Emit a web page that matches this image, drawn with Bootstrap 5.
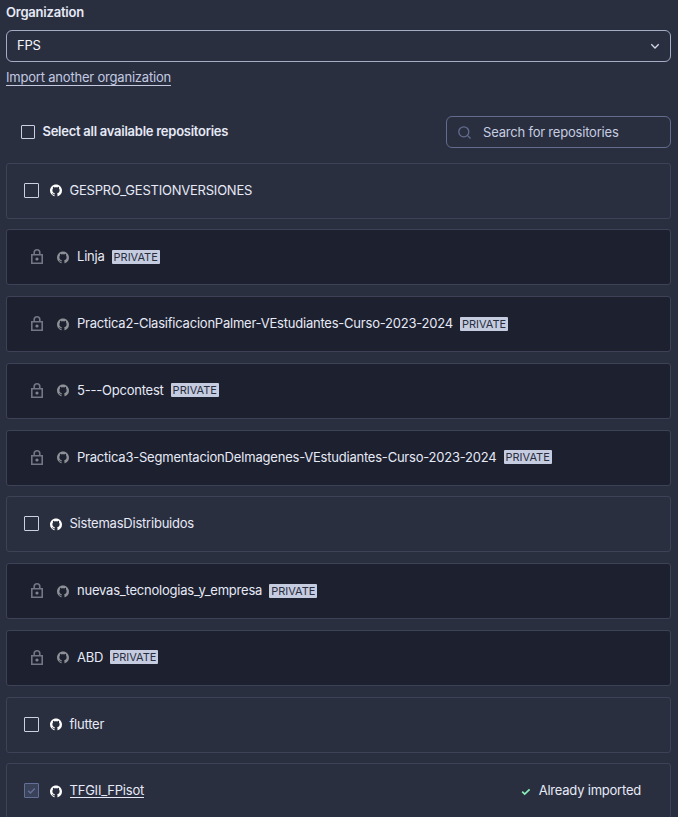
<!DOCTYPE html>
<html lang="en">
<head>
<meta charset="utf-8">
<meta name="viewport" content="width=device-width, initial-scale=1">
<title>Import repositories</title>
<link href="https://cdn.jsdelivr.net/npm/bootstrap@5.3.0/dist/css/bootstrap.min.css" rel="stylesheet">
<style>
html, body { height: 817px; overflow: hidden; }
body { background: #2a2f40; color: #e6eaf6; font: 400 13px/18px Inter, sans-serif; letter-spacing: -.22px; }
.page { padding: 3px 7px 0 6px; }
.org-label { font-weight: 600; line-height: 18px; margin-bottom: 9px; }
.org-select { height: 32px; border: 1px solid #a5adc6; border-radius: 6px; padding: 0 9px 0 10px; color: #f4f5fb; }
.org-select span { padding-bottom: 2px; }
.import-link { color: #c3cae0; line-height: 15px; border-bottom: 1px solid #c3cae0; margin-top: 8px; letter-spacing: -.2px; }
.toolbar { margin-top: 30px; padding-left: 15px; height: 32px; }
.toolbar-label { font-weight: 600; margin-left: 7.5px; padding-bottom: 2px; letter-spacing: -.26px; }
.search { width: 225px; height: 32px; border: 1px solid #626c8f; border-radius: 6px; padding-left: 11px; color: #c6cde0; letter-spacing: -.2px; }
.repos { margin-top: 14.6px; gap: 10.75px; }
.repo { height: 56px; flex: none; border: 1px solid #3d4256; border-radius: 3px; padding: 0 29px 1px 17px; }
.repo > span:not(.box):not(.tag) { padding-bottom: 1px; }
.repo.locked { background: #1d202f; padding-left: 24px; }
.box { width: 15px; height: 15px; flex: none; border: 1px solid #cbd1e3; border-radius: 1px; }
.box.small-box { width: 14px; height: 14px; }
.box.done { background: #3a425a; border-color: #626f97; }
.gh { width: 12px; height: 13px; fill: #fff; margin: 1px 7.5px 0 11px; flex: none; }
.locked .gh { fill: #8e9097; margin: 1px 8px 0 14px; }
.lock { width: 12px; height: 15px; flex: none; }
.tag { background: #c5cce0; color: #2a2f40; font-size: 11px; line-height: 14px; height: 14px; padding: 0 2px; border-radius: 1px; margin-left: 7px; letter-spacing: 0; }
.repo-link { color: #e6eaf6; line-height: 14px; border-bottom: 1px solid #e6eaf6; }
svg { display: block; }
</style>
</head>
<body>
<svg width="0" height="0" class="d-none" aria-hidden="true">
<symbol id="github" viewBox="0 0 16 16"><path d="M8 0C3.58 0 0 3.58 0 8c0 3.54 2.29 6.53 5.47 7.59.4.07.55-.17.55-.38v-1.49c-2.01.37-2.53-.49-2.69-.94-.09-.23-.48-.94-.82-1.13.7-.3 1.2.1 1.5.5.6.9 1.3.9 2 .7.07-.6.3-1 .6-1.3C4.400 11.200 3.200 9.900 3.200 7.500c0-.9.3-1.7.8-2.3-.1-.6-.2-1.300.1-2.100.8 0 1.500.4 2.200.9 1.100-.3 2.300-.3 3.400 0 .7-.5 1.400-.9 2.200-.9.3.8.2 1.500.1 2.100.5.6.8 1.400.8 2.300 0 2.400-1.200 3.700-3.400 4 .3.3.55.8.55 1.500v2.200c0 .21.15.46.55.38A8.010 8.010 0 0 0 16 8c0-4.420-3.580-8-8-8z"/></symbol>
<symbol id="lock" viewBox="0 0 12 15"><path d="M.8 5.8h10.4v8.4H.8zM3.2 5.5V3.6a2.8 2.8 0 0 1 5.6 0v1.9" fill="none" stroke="#737685" stroke-width="1.6"/><circle cx="6" cy="10" r="1.6" fill="#7f8290"/></symbol>
</svg>
<main class="page">
  <div class="org-label">Organization</div>
  <div class="org-select d-flex align-items-center justify-content-between" role="button">
    <span>FPS</span>
    <svg width="12" height="12" viewBox="0 0 12 12" fill="none" stroke="#d5daea" stroke-width="1.3"><path d="M2.3 4.3 6 8l3.7-3.7"/></svg>
  </div>
  <a class="import-link d-inline-block align-top text-decoration-none" href="#">Import another organization</a>
  <div class="toolbar d-flex align-items-center justify-content-between">
    <div class="d-flex align-items-center"><span class="box small-box"></span><span class="toolbar-label">Select all available repositories</span></div>
    <div class="search d-flex align-items-center">
      <svg width="13" height="13" viewBox="0 0 13 13" fill="none" stroke="#626c8f" stroke-width="1.3"><circle cx="5.8" cy="5.8" r="5"/><path d="m9.4 9.4 3.1 3.1"/></svg>
      <span class="ms-2 ps-1">Search for repositories</span>
    </div>
  </div>
  <div class="repos d-flex flex-column">
    <div class="repo d-flex align-items-center"><span class="box"></span><svg class="gh"><use href="#github"/></svg><span>GESPRO_GESTIONVERSIONES</span></div>
    <div class="repo locked d-flex align-items-center"><svg class="lock"><use href="#lock"/></svg><svg class="gh"><use href="#github"/></svg><span>Linja</span><span class="tag">PRIVATE</span></div>
    <div class="repo locked d-flex align-items-center"><svg class="lock"><use href="#lock"/></svg><svg class="gh"><use href="#github"/></svg><span>Practica2-ClasificacionPalmer-VEstudiantes-Curso-2023-2024</span><span class="tag">PRIVATE</span></div>
    <div class="repo locked d-flex align-items-center"><svg class="lock"><use href="#lock"/></svg><svg class="gh"><use href="#github"/></svg><span>5---Opcontest</span><span class="tag">PRIVATE</span></div>
    <div class="repo locked d-flex align-items-center"><svg class="lock"><use href="#lock"/></svg><svg class="gh"><use href="#github"/></svg><span>Practica3-SegmentacionDeImagenes-VEstudiantes-Curso-2023-2024</span><span class="tag">PRIVATE</span></div>
    <div class="repo d-flex align-items-center"><span class="box"></span><svg class="gh"><use href="#github"/></svg><span>SistemasDistribuidos</span></div>
    <div class="repo locked d-flex align-items-center"><svg class="lock"><use href="#lock"/></svg><svg class="gh"><use href="#github"/></svg><span>nuevas_tecnologias_y_empresa</span><span class="tag">PRIVATE</span></div>
    <div class="repo locked d-flex align-items-center"><svg class="lock"><use href="#lock"/></svg><svg class="gh"><use href="#github"/></svg><span>ABD</span><span class="tag">PRIVATE</span></div>
    <div class="repo d-flex align-items-center"><span class="box"></span><svg class="gh"><use href="#github"/></svg><span>flutter</span></div>
    <div class="repo d-flex align-items-center">
      <span class="box done d-flex align-items-center justify-content-center"><svg width="9" height="9" viewBox="0 0 9 9" fill="none" stroke="#65709a" stroke-width="1.4"><path d="m1.2 4.8 2.2 2.1 4.4-4.4"/></svg></span>
      <svg class="gh"><use href="#github"/></svg><a class="repo-link text-decoration-none" href="#">TFGII_FPisot</a>
      <span class="ms-auto d-flex align-items-center"><svg class="me-2 mt-1" width="10" height="8" viewBox="0 0 10 8" fill="none" stroke="#8af0b8" stroke-width="1.7"><path d="m1.2 3.6 2.5 2.4L8.6 1.4"/></svg>Already imported</span>
    </div>
  </div>
</main>
<script src="https://cdn.jsdelivr.net/npm/bootstrap@5.3.0/dist/js/bootstrap.bundle.min.js"></script>
</body>
</html>
